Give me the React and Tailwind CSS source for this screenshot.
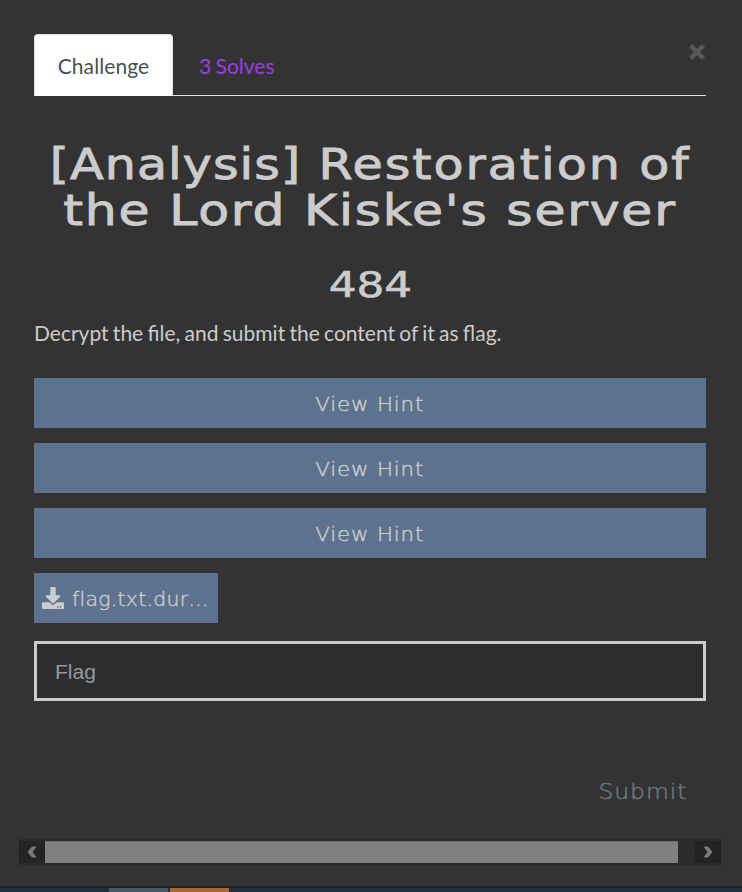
import { FaDownload } from "react-icons/fa";

const DISPLAY = "font-['DejaVu_Sans',sans-serif]";

function HintButton() {
  return (
    <button className={`${DISPLAY} block h-[50px] w-full bg-[#5c728f] pt-[3px] text-center text-[19px] font-extralight tracking-[0.8px] text-[#cccccc] [-webkit-text-stroke:0.4px]`}>
      <span className="inline-block scale-x-[1.12]">View Hint</span>
    </button>
  );
}

function Tabs() {
  return (
    <nav className="flex h-[62px] border-b border-[#dee2e6] text-[21px]">
      <span className="-mb-px flex w-[139px] items-center justify-center rounded-t border border-b-0 border-[#dee2e6] bg-white tracking-[0.1px] text-[#495057]">Challenge</span>
      <span className="ml-[26px] flex items-center pt-[3px] text-[#9b40e0] [word-spacing:-1px]">3 Solves</span>
    </nav>
  );
}

function ScrollBar() {
  return (
    <div className="ml-[19px] mt-auto flex h-[26px] w-[702px] items-center border-y border-[#2a2a2a] bg-[#2b2b2b]">
      <div className="flex h-[22px] w-[26px] items-center justify-center bg-[#232325]">
        <svg width="10" height="12" viewBox="0 0 10 12" fill="#7b7b7b"><path d="M5 0.5h4.5L5.5 6l4 5.5H5L0.5 6z" /></svg>
      </div>
      <div className="h-[22px] w-[633px] border-t border-[#6c6c6c] bg-[#808080]" />
      <div className="ml-auto flex h-[22px] w-[26px] items-center justify-center bg-[#232325]">
        <svg width="10" height="12" viewBox="0 0 10 12" fill="#7b7b7b"><path d="M0.5 0.5H5L9.5 6 5 11.5H0.5l4-5.5z" /></svg>
      </div>
    </div>
  );
}

export default function App() {
  return (
    <div className="flex h-[892px] w-[742px] flex-col overflow-hidden bg-[#333333] font-[Lato,sans-serif] text-[#cccccc]">
      <main className="relative ml-[34px] w-[672px] pt-[34px]">
        <button aria-label="Close" className="absolute right-0 top-[43px]">
          <svg width="18" height="18" viewBox="0 0 18 18" stroke="#595959" strokeWidth="4.5"><path d="M2.5 2.5l13 13M15.5 2.5l-13 13" /></svg>
        </button>
        <Tabs />
        <h1 className={`${DISPLAY} mt-[46px] text-center text-[42px] leading-[46px] tracking-[1.5px] whitespace-nowrap [-webkit-text-stroke:0.9px]`}>
          <span className="block scale-x-[1.17]"><span className="tracking-[0.9px]">[Analysis]</span> <span className="tracking-[1.7px]">Restoration</span> of</span>
          <span className="block scale-x-[1.2]">the Lord Kiske's server</span>
        </h1>
        <h2 className={`${DISPLAY} mt-[31px] text-center text-[35px] leading-[40px] [-webkit-text-stroke:0.6px]`}>
          <span className="inline-block scale-x-[1.25]">484</span>
        </h2>
        <p className="mt-[11px] text-[21px] leading-[33px] [word-spacing:-1.1px]">Decrypt the file, and submit the content of it as flag.</p>
        <div className="mt-[29px] flex flex-col gap-[15px]">
          <HintButton />
          <HintButton />
          <HintButton />
        </div>
        <button className={`${DISPLAY} mt-[15px] flex h-[50px] w-[184px] items-center gap-[8px] bg-[#5c728f] pl-[8px] text-[19px] font-extralight tracking-[0.3px] [-webkit-text-stroke:0.4px]`}>
          <FaDownload size={22} />
          <span className="origin-left scale-x-[1.07] pt-[2px]">flag.txt.dur…</span>
        </button>
        <div className="mt-[18px] flex h-[60px] items-center border-[3px] border-[#cccccc] bg-[#2d2d2d] pl-[18px] pt-[2px] font-['Liberation_Sans',sans-serif] text-[21px] text-[#999999]">Flag</div>
        <div className={`${DISPLAY} mt-[72px] flex h-[40px] items-center justify-end pr-[19px] text-[21px] font-extralight tracking-[0.8px] text-[#6c757d] [-webkit-text-stroke:0.5px]`}>
          <span className="origin-right scale-x-[1.12]">Submit</span>
        </div>
      </main>
      <ScrollBar />
      <footer className="mt-[21px] flex h-[6px] border-t-2 border-[#222426] bg-[#20303f]">
        <div className="ml-[109px] h-[4px] w-[59px] bg-[#4b5962]" />
        <div className="ml-[2px] h-[4px] w-[59px] bg-[#aa672f]" />
      </footer>
    </div>
  );
}
